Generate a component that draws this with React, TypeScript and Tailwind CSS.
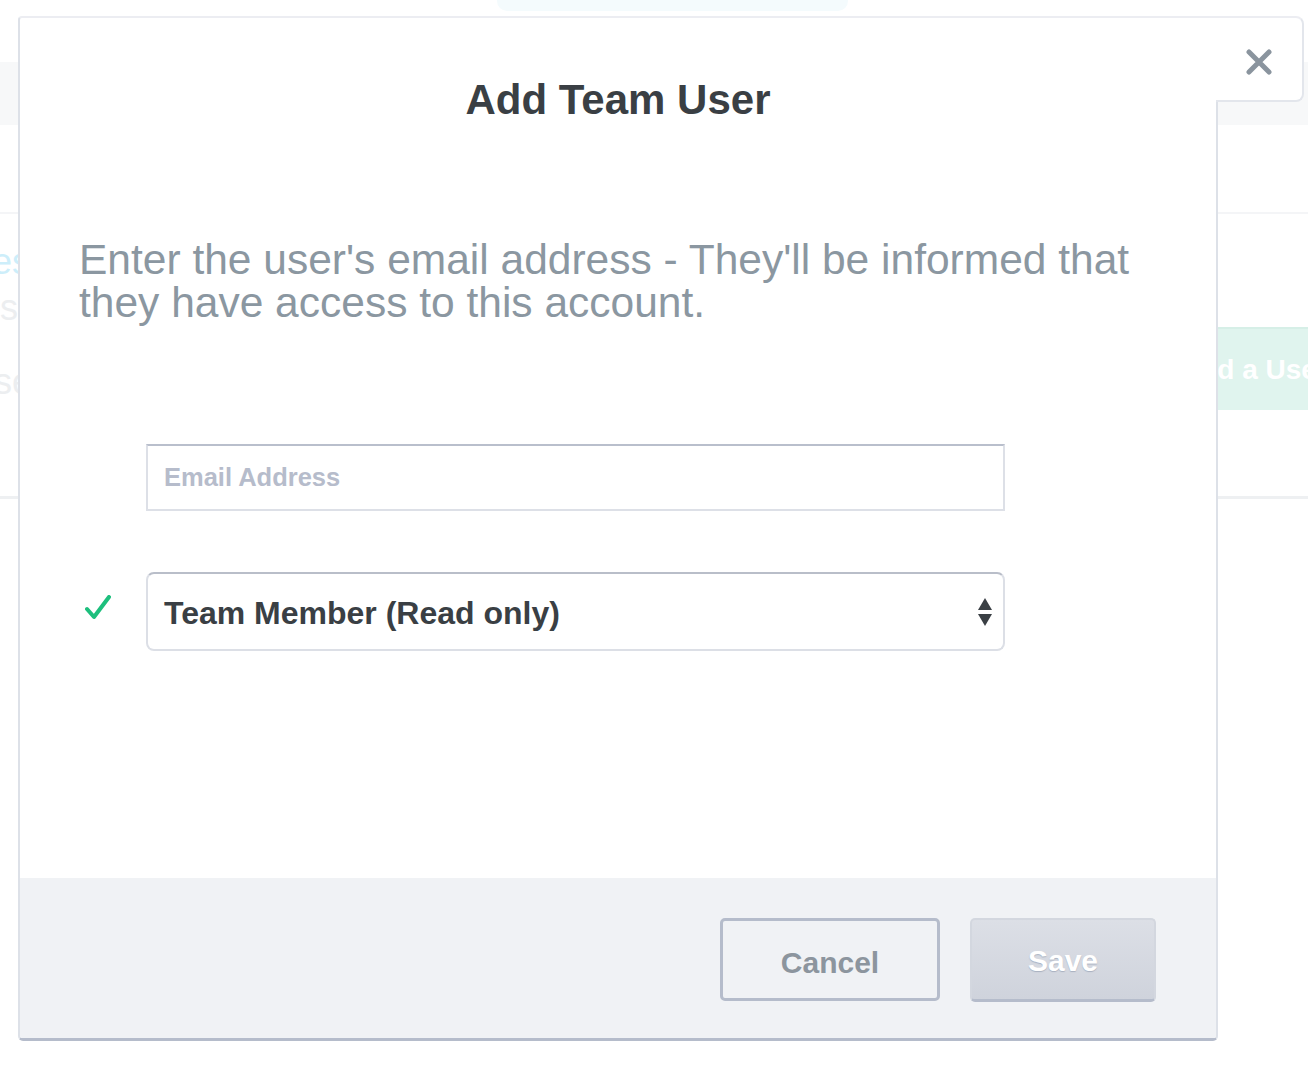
import React from "react";

function CheckIcon() {
  return (
    <svg width="26" height="26" viewBox="0 0 26 26" className="mb-[8px] shrink-0">
      <path d="M2 14 L9 22 L24 2" fill="none" stroke="#1dbf7d" strokeWidth="4" strokeLinecap="round" strokeLinejoin="round" />
    </svg>
  );
}

function SelectArrows() {
  return (
    <svg width="14" height="28" viewBox="0 0 14 28">
      <path d="M7 0 L14 12 L0 12 Z" fill="#3a3f44" />
      <path d="M0 16 L14 16 L7 28 Z" fill="#3a3f44" />
    </svg>
  );
}

function CloseIcon() {
  return (
    <svg width="26" height="26" viewBox="0 0 26 26">
      <path d="M3 3 L23 23 M23 3 L3 23" stroke="#8a949e" strokeWidth="5" strokeLinecap="round" />
    </svg>
  );
}

export default function App() {
  return (
    <div className="relative w-[1308px] h-[1072px] overflow-hidden bg-white font-['Liberation_Sans',Arial,sans-serif]">
      {/* page behind the modal */}
      <div className="flex flex-col">
        <div className="h-[11px] ml-[497px] w-[351px] rounded-b-[10px] bg-[#f4fbfd]" />
        <div className="mt-[51px] h-[63px] bg-[#f7f8f9]" />
        <div className="mt-[87px] h-[2px] bg-[#f4f5f7]" />
        <div className="flex justify-between h-[282px]">
          <div className="w-[18px] flex flex-col items-end pt-[28px] text-[36px] leading-[40px] whitespace-nowrap">
            <p className="-mr-[12px] text-[#cdeefa]">Roles</p>
            <p className="mt-[6px] text-[#eceef0]">Users</p>
            <p className="mt-[34px] -mr-[14px] text-[#eceef0]">Close</p>
          </div>
          <div className="pt-[113px]">
            <div className="w-[200px] -mr-[50px] h-[83px] flex items-center pl-[22px] bg-[#e0f4ee] border-t-2 border-[#d6efe7] text-white text-[28px] font-bold whitespace-nowrap">
              Add a User
            </div>
          </div>
        </div>
        <div className="h-[3px] bg-[#eef0f2]" />
      </div>

      {/* modal */}
      <div className="absolute left-[18px] top-[16px] flex items-start">
        <div className="w-[1200px] flex flex-col bg-white border-x-2 border-t-2 border-b-[3px] border-x-[#dde1e8] border-t-[#ecedf2] border-b-[#b5bccb] rounded-tl-[4px] rounded-b-[5px] overflow-hidden">
          <div className="h-[860px] flex flex-col">
            <h1 className="pt-[61px] text-center text-[42px] leading-[42px] font-bold text-[#3a3f44]">
              Add Team User
            </h1>
            <p className="mt-[117px] pl-[59px] pr-[60px] text-[42.5px] leading-[43px] text-[#8b97a1]">
              Enter the user's email address - They'll be informed that they have access to this account.
            </p>
            <input
              type="email"
              placeholder="Email Address"
              className="mt-[120px] ml-[126px] w-[859px] h-[67px] border-2 border-[#dde0e7] border-t-[#b9bfcc] px-[16px] text-[25.5px] font-bold text-[#3a3f44] placeholder:text-[#b6bccb] outline-none"
            />
            <div className="mt-[61px] flex items-center pl-[65px]">
              <CheckIcon />
              <div className="ml-[35px] w-[859px] h-[79px] rounded-[8px] border-2 border-[#dcdfe6] border-t-[#b9bec9] flex items-center justify-between pl-[16px] pr-[11px]">
                <span className="pt-[2px] text-[32px] font-bold text-[#3a3f44]">Team Member (Read only)</span>
                <SelectArrows />
              </div>
            </div>
          </div>
          <div className="h-[160px] bg-[#f0f2f5] flex justify-end items-start pt-[40px] pr-[60px] gap-[30px]">
            <button className="w-[220px] h-[83px] pt-[6px] border-[3px] border-[#b5bccb] rounded-[5px] text-[30px] font-bold text-[#8c959e]">
              Cancel
            </button>
            <button className="w-[186px] h-[84px] rounded-[5px] border-2 border-[#d3d7df] border-b-[3px] border-b-[#b5bccb] bg-linear-to-b from-[#dcdfe6] to-[#cfd3dc] text-[30px] font-bold text-white pt-[2px] [text-shadow:0_1px_1px_rgba(150,160,178,0.7)]">
              Save
            </button>
          </div>
        </div>
        <div className="relative z-10 -ml-[2px] w-[88px] h-[86px] flex items-center justify-center pt-[6px] bg-white border-2 border-l-0 border-[#e3e6ec] border-t-[#ecedf2] rounded-r-[8px]">
          <CloseIcon />
        </div>
      </div>
    </div>
  );
}
